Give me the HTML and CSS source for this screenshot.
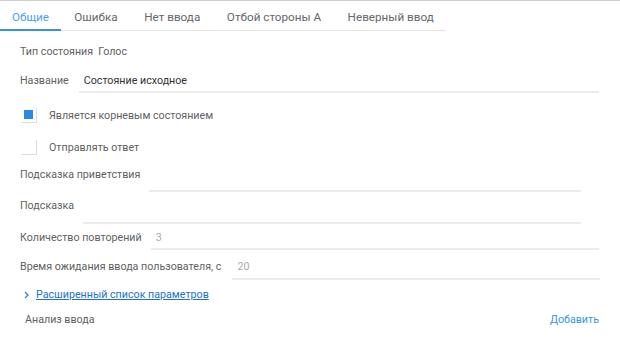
FILE: index.html
```html
<!DOCTYPE html>
<html lang="ru">
<head>
<meta charset="utf-8">
<link rel="stylesheet" href="styles.css">
</head>
<body>
<div class="page">
  <nav class="tabs">
    <a class="tab active">Общие</a>
    <a class="tab">Ошибка</a>
    <a class="tab">Нет ввода</a>
    <a class="tab">Отбой стороны А</a>
    <a class="tab">Неверный ввод</a>
  </nav>
  <div class="form">
    <div class="row r-type"><span class="label">Тип состояния</span><span class="value">Голос</span></div>
    <div class="row r-name"><span class="label">Название</span><span class="field f-name">Состояние исходное</span></div>
    <div class="row r-check1"><span class="check"><span class="dot"></span></span><span class="label">Является корневым состоянием</span></div>
    <div class="row r-check2"><span class="check"></span><span class="label">Отправлять ответ</span></div>
    <div class="row top r-hint1"><span class="label">Подсказка приветствия</span><span class="field f-hint1"></span></div>
    <div class="row top r-hint2"><span class="label">Подсказка</span><span class="field f-hint2"></span></div>
    <div class="row r-rep"><span class="label">Количество повторений</span><span class="field f-num">3</span></div>
    <div class="row r-time"><span class="label">Время ожидания ввода пользователя, с</span><span class="field f-num2">20</span></div>
    <div class="row r-adv"><svg class="chev" width="5" height="8" viewBox="0 0 5 8"><path d="M1 1 L4 4 L1 7" fill="none" stroke="#2a7fd0" stroke-width="1.2"/></svg><a class="link">Расширенный список параметров</a></div>
    <div class="row r-anal"><span class="label">Анализ ввода</span><a class="add">Добавить</a></div>
  </div>
</div>
</body>
</html>
```
FILE: styles.css
```css
* { box-sizing: border-box; }
html, body { margin: 0; padding: 0; background: #fff; }
body {
  font-family: Roboto, "Liberation Sans", Arial, sans-serif;
  font-size: 10.7px;
  line-height: 14px;
  color: #5f5f5f;
  width: 620px;
  height: 348px;
  overflow: hidden;
}
.page { border-top: 1px solid #cfcfcf; }
.tabs {
  display: flex;
  width: 446px;
  height: 30px;
  border-bottom: 1px solid #e3e3e3;
}
.tab {
  padding: 9px 13.3px 0 13.3px;
  font-size: 11.7px;
  line-height: 14px;
  white-space: nowrap;
  color: #666;
}
.tab:first-child { padding-left: 12px; padding-right: 12px; }
.tab.active {
  color: #4a9ff0;
  border-bottom: 2px solid #3590e8;
  height: 30px;
  margin-bottom: -1px;
}
.form { padding-left: 20px; }
.row { display: flex; align-items: baseline; }
.row.top { align-items: flex-start; }
.label { white-space: nowrap; }
.value { margin-left: 5px; }
.field {
  flex: 1;
  border-bottom: 2px solid #ebebeb;
  color: #333;
  margin-left: 10px;
}
.r-type { margin-top: 14px; }
.r-name { margin-top: 15px; }
.f-name { padding: 0 5px 3px; margin-right: 21px; }
.r-check1, .r-check2 { align-items: center; }
.r-check1 { margin-top: 15px; }
.r-check2 { margin-top: 17px; }
.check {
  flex: none;
  width: 16px; height: 15px;
  margin-left: 1px;
  margin-right: 12px;
  border-right: 1px solid #dcdcdc;
  border-bottom: 1px solid #dcdcdc;
  display: flex; align-items: center; justify-content: center;
  padding-bottom: 1px;
}
.check .dot { width: 9px; height: 9px; background: #2a8ae3; }
.r-hint1 { margin-top: 13px; }
.f-hint1 { height: 24px; margin-left: 9px; margin-right: 39px; }
.r-hint2 { margin-top: 7px; }
.f-hint2 { height: 25px; margin-left: 9px; margin-right: 39px; }
.r-rep { margin-top: 7px; }
.f-num { padding: 0 5px 3px; color: #aaa; margin-left: 9px; margin-right: 21px; }
.r-time { margin-top: 10px; }
.f-num2 { padding: 0 5px 4px; color: #aaa; margin-left: 11px; margin-right: 20px; }
.r-adv { margin-top: 8px; align-items: center; padding-left: 4px; }
.chev { margin-right: 7px; }
.link { color: #1d72c8; text-decoration: underline; }
.r-anal { margin-top: 11px; padding-left: 5px; padding-right: 21px; justify-content: space-between; }
.add { color: #3a94e6; }
```
